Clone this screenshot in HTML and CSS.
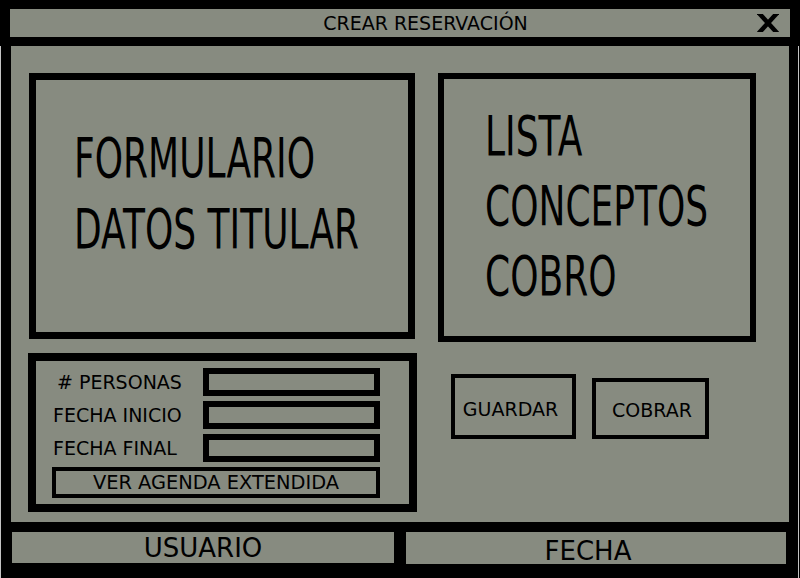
FILE: index.html
```html
<!DOCTYPE html>
<html lang="es">
<head>
  <meta charset="UTF-8" />
  <title>Crear Reservación</title>
  <link rel="stylesheet" href="styles.css">
</head>
<body>
  <header class="titlebar">
    <span class="title">CREAR RESERVACIÓN</span>
    <svg class="close" width="22" height="18" viewBox="0 0 22 18">
      <line x1="1" y1="-2" x2="21" y2="20" stroke="#000" stroke-width="4.5" />
      <line x1="1" y1="20" x2="21" y2="-2" stroke="#000" stroke-width="4.5" />
    </svg>
  </header>

  <div class="frame">
    <main class="main">
      <div class="col-left">
        <section class="box box-form">
          <div class="big">FORMULARIO<br>DATOS TITULAR</div>
        </section>

        <section class="box box-fields">
          <div class="field">
            <span class="field-label label-hash"># PERSONAS</span>
            <div class="input"></div>
          </div>
          <div class="field">
            <span class="field-label">FECHA INICIO</span>
            <div class="input"></div>
          </div>
          <div class="field">
            <span class="field-label">FECHA FINAL</span>
            <div class="input"></div>
          </div>
          <div class="btn btn-agenda">VER AGENDA EXTENDIDA</div>
        </section>
      </div>

      <div class="col-right">
        <section class="box box-lista">
          <div class="big big-lista">LISTA<br>CONCEPTOS<br>COBRO</div>
        </section>

        <div class="actions">
          <div class="btn btn-guardar">GUARDAR</div>
          <div class="btn btn-cobrar">COBRAR</div>
        </div>
      </div>
    </main>

    <footer class="statusbar">
      <div class="status status-user">USUARIO</div>
      <div class="status status-date">FECHA</div>
    </footer>
  </div>
</body>
</html>
```

FILE: styles.css
```css
body {
  margin: 0;
  width: 800px;
  height: 578px;
  overflow: hidden;
  background: #000;
  color: #000;
  font-family: "DejaVu Sans", sans-serif;
}
/* Barre de titre */
.titlebar {
  margin: 9px 0 0 10px;
  width: 780px;
  height: 28px;
  background: #878b80;
  display: flex;
  align-items: center;
}
.title {
  flex: 1;
  padding-left: 84px;
  text-align: center;
  font-size: 19px;
}
.close {
  display: block;
  margin-right: 11px;
}
.frame {
  margin-top: 9px;
  width: 799px;
  height: 532px;
  box-sizing: border-box;
  border-left: 1px solid #c4c4c4;
  border-right: 1px solid #c4c4c4;
}
.main {
  margin-left: 10px;
  width: 778px;
  height: 476px;
  box-sizing: border-box;
  padding: 27px 0 0 18px;
  background: #878b80;
  display: flex;
  gap: 23px;
}
.box {
  box-sizing: border-box;
  border: 7px solid #000;
}
.big {
  font-size: 56px;
  line-height: 71px;
  white-space: nowrap;
  transform: scaleX(0.643);
  transform-origin: left top;
}
.col-left {
  width: 386px;
}
.box-form {
  height: 266px;
  padding: 42px 0 0 38px;
}
.box-fields {
  margin: 14px 0 0 -1px;
  width: 389px;
  height: 159px;
  border-width: 8px;
  padding: 7px 0 0 17px;
  display: flex;
  flex-direction: column;
  gap: 5px;
}
.field {
  display: flex;
  align-items: center;
}
.field-label {
  width: 150px;
  font-size: 19px;
}
.label-hash {
  padding-left: 4px;
  width: 146px;
}
.input {
  width: 177px;
  height: 28px;
  box-sizing: border-box;
  border: 6px solid #000;
}
.btn {
  box-sizing: border-box;
  border: 4px solid #000;
  font-size: 19px;
  display: flex;
  align-items: center;
  justify-content: center;
}
.btn-agenda {
  margin-left: -1px;
  width: 328px;
  height: 31px;
  font-size: 19.4px;
}
.col-right {
  width: 318px;
}
.box-lista {
  height: 269px;
  border-width: 6px;
  padding: 22px 0 0 41px;
}
.big-lista {
  line-height: 70px;
}
.actions {
  display: flex;
  align-items: flex-end;
  margin-top: 32px;
  padding-left: 13px;
}
.btn-guardar {
  width: 125px;
  height: 65px;
  padding-right: 6px;
  padding-top: 4px;
}
.btn-cobrar {
  margin-left: 16px;
  width: 117px;
  height: 61px;
  padding-left: 3px;
  padding-top: 3px;
}
/* Barre d'état */
.statusbar {
  display: flex;
  align-items: flex-start;
  padding-top: 10px;
}
.status {
  background: #878b80;
  font-size: 26px;
  display: flex;
  align-items: center;
  justify-content: center;
}
.status-user {
  margin-left: 11px;
  width: 382px;
  height: 31px;
}
.status-date {
  margin-left: 12px;
  width: 380px;
  height: 32px;
  padding-top: 5px;
  padding-right: 16px;
  box-sizing: border-box;
}
```
